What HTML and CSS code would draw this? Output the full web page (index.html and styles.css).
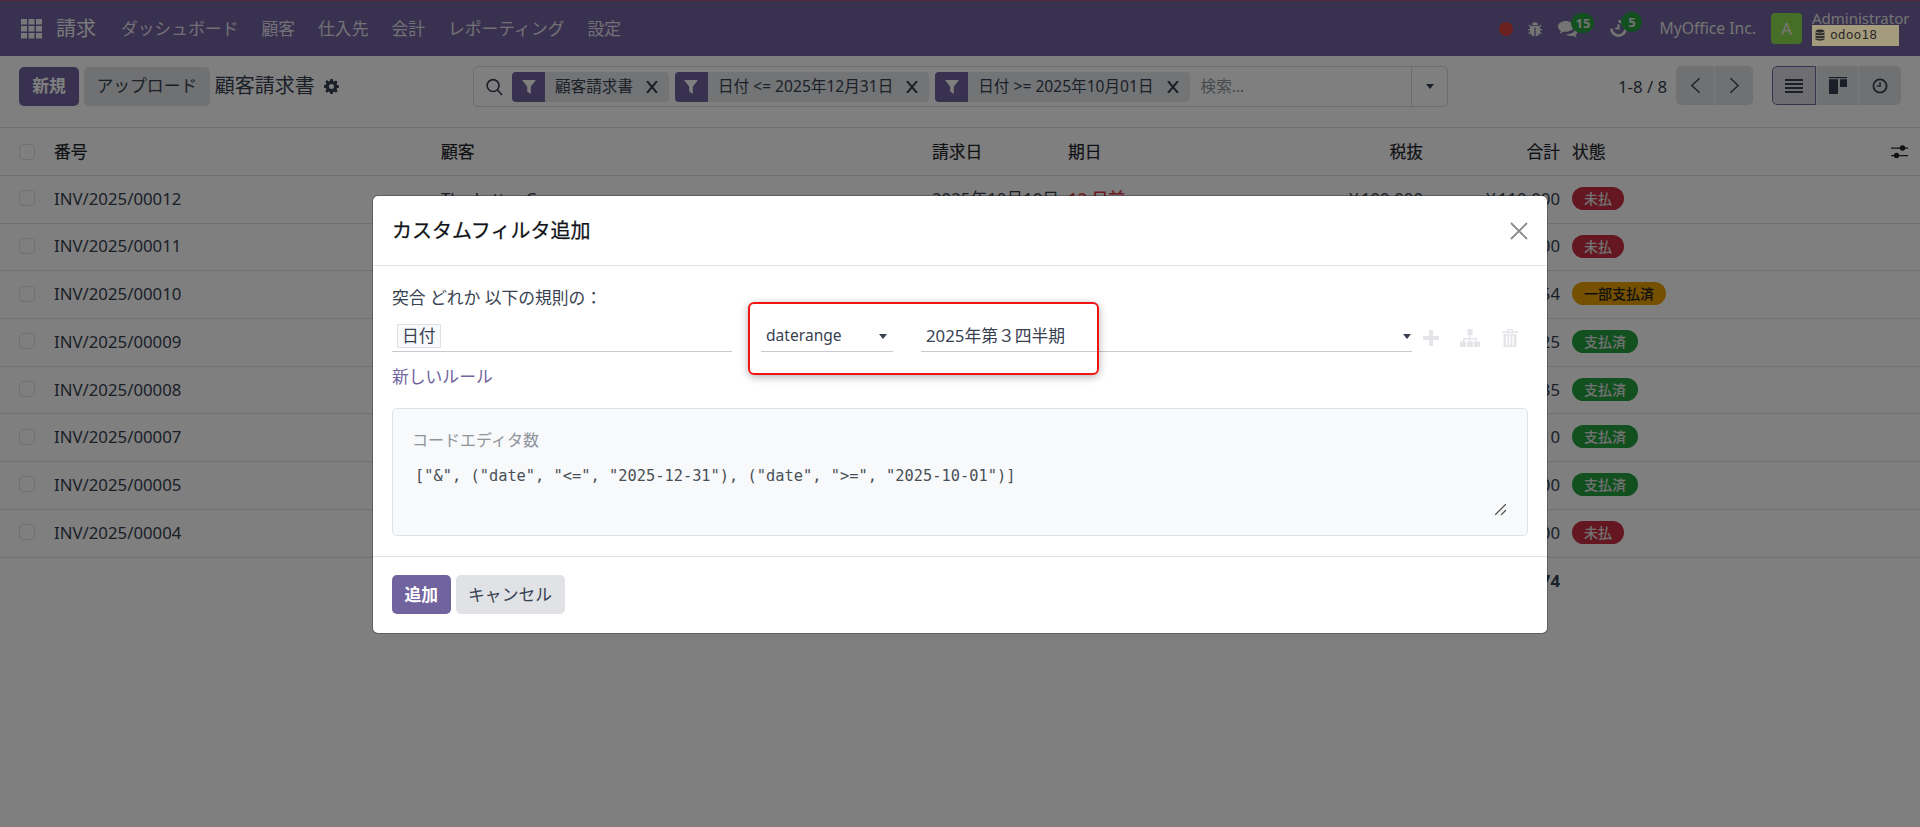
FILE: index.html
```html
<!DOCTYPE html>
<html lang="ja">
<head>
  <meta charset="UTF-8"/>
  <title>顧客請求書</title>
  <link rel="stylesheet" href="styles.css">
</head>
<body>
  <!-- top navbar -->
  <header class="navbar">
    <svg class="apps-icon" viewBox="0 0 21 20"><path d="M0 0h6v5.500H0zM7.500 0h6v5.500h-6zM15 0h6v5.500h-6zM0 7h6v5.500H0zM7.500 7h6v5.500h-6zM15 7h6v5.500h-6zM0 14h6v5.500H0zM7.500 14h6v5.500h-6zM15 14h6v5.500h-6z"/></svg>
    <span class="app-name">請求</span>
    <nav class="menu">
      <a>ダッシュボード</a><a>顧客</a><a>仕入先</a><a>会計</a><a>レポーティング</a><a>設定</a>
    </nav>
    <div class="systray">
      <span class="rec-dot"></span>
      <svg class="tray-bug" viewBox="0 0 16 16"><path d="M5 4.200a3 3 0 0 1 6 0zM3.800 5h8.400l1.500-1.600.9.900-1.600 1.700V8H15v1.300h-2v1.200l1.700 1.800-.9.900-1.200-1.300A4 4 0 0 1 8.600 15V6.500H7.400V15a4 4 0 0 1-4-3.100l-1.200 1.300-.9-.9L3 10.500V9.300H1V8h2V6L1.400 4.300l.9-.9z"/></svg>
      <span class="tray-item tray-chat">
        <svg viewBox="0 0 20 17"><path d="M8 1C3.800 1 .5 3.300.5 6.200c0 1.700 1.100 3.200 2.800 4.100-.2.900-.8 1.700-1.400 2.300 1.500-.2 2.800-.8 3.800-1.600.7.100 1.500.2 2.300.2 4.200 0 7.500-2.300 7.500-5S12.200 1 8 1z"/><path d="M17 7.500c0 3-3 5.500-7.500 6-.5 0-.9.100-1.300.1 1.200.9 2.900 1.400 4.600 1.400.6 0 1.200-.1 1.800-.2 1 .8 2.300 1.400 3.800 1.600-.6-.6-1.200-1.400-1.400-2.300 1.400-.8 2-2 2-3.300 0-1.200-.9-2.400-2-3z"/></svg>
        <b class="tray-badge">15</b>
      </span>
      <span class="tray-item tray-clock">
        <svg viewBox="0 0 18 18"><path d="M9 1a8 8 0 1 1-8 8h2.600A5.400 5.400 0 1 0 9 3.600z"/><path d="M8 5h2v5H6V8h2z"/></svg>
        <b class="tray-badge">5</b>
      </span>
      <span class="company">MyOffice Inc.</span>
      <span class="avatar">A</span>
      <div class="user">
        <span class="user-name">Administrator</span>
        <span class="db-name"><svg viewBox="0 0 12 13"><path d="M6 0c3 0 5.500.8 5.500 1.800S9 3.700 6 3.700.5 2.800.5 1.800 3 0 6 0zM.5 3.300C1.500 4.200 3.600 4.700 6 4.700s4.500-.5 5.500-1.400v2C11.500 6.200 9 7 6 7S.5 6.200.5 5.300zM.5 6.800C1.500 7.700 3.600 8.100 6 8.100s4.500-.4 5.500-1.300v2C11.500 9.700 9 10.500 6 10.500S.5 9.700.5 8.800zM.5 10.200c1 .9 3.100 1.300 5.500 1.300s4.500-.4 5.500-1.300v1c0 1-2.500 1.800-5.500 1.800S.5 12.200.5 11.200z"/></svg>odoo18</span>
      </div>
    </div>
  </header>

  <!-- control panel -->
  <section class="control-panel">
    <button class="btn btn-primary">新規</button>
    <button class="btn btn-secondary">アップロード</button>
    <span class="page-title">顧客請求書</span>
    <svg class="gear" viewBox="0 0 16 16"><path d="M6.700 0h2.600l.4 2.100 1.300.6L12.800 1.500l1.800 1.800-1.200 1.800.6 1.300 2 .4v2.500l-2 .4-.6 1.300 1.200 1.800-1.800 1.800-1.800-1.200-1.300.6-.4 2H6.700l-.4-2-1.300-.6-1.800 1.200-1.800-1.800 1.200-1.800-.6-1.300-2-.4V6.400l2-.4.6-1.300-1.200-1.800 1.800-1.800L5 2.700l1.300-.6zM8 5.300a2.700 2.700 0 1 0 0 5.400 2.700 2.700 0 0 0 0-5.400z" fill-rule="evenodd"/></svg>

    <div class="searchbar">
      <svg class="search-icon" viewBox="0 0 18 18"><circle cx="7.500" cy="7.500" r="6.300"/><path d="M12 12l5 5.500"/></svg>
      <div class="facet">
        <span class="facet-icon"><svg viewBox="0 0 14 14"><path d="M0 0h14L8.800 6.500V14L5.200 11.500v-5z"/></svg></span>
        <span class="facet-text">顧客請求書</span><svg class="facet-x" viewBox="0 0 12 12"><path d="M1 0l10 12M11 0L1 12"/></svg>
      </div>
      <div class="facet">
        <span class="facet-icon"><svg viewBox="0 0 14 14"><path d="M0 0h14L8.800 6.500V14L5.200 11.500v-5z"/></svg></span>
        <span class="facet-text">日付 &lt;= 2025年12月31日</span><svg class="facet-x" viewBox="0 0 12 12"><path d="M1 0l10 12M11 0L1 12"/></svg>
      </div>
      <div class="facet">
        <span class="facet-icon"><svg viewBox="0 0 14 14"><path d="M0 0h14L8.800 6.500V14L5.200 11.500v-5z"/></svg></span>
        <span class="facet-text">日付 &gt;= 2025年10月01日</span><svg class="facet-x" viewBox="0 0 12 12"><path d="M1 0l10 12M11 0L1 12"/></svg>
      </div>
      <span class="search-placeholder">検索...</span>
      <span class="search-toggle"><i class="caret"></i></span>
    </div>

    <span class="pager-text">1-8 / 8</span>
    <div class="btn-group pager">
      <button class="group-btn"><svg viewBox="0 0 12 18"><path d="M10.500 1L2 9l8.500 8"/></svg></button>
      <button class="group-btn"><svg viewBox="0 0 12 18"><path d="M1.500 1L10 9l-8.500 8"/></svg></button>
    </div>
    <div class="btn-group views">
      <button class="group-btn view-btn active"><svg class="ico-list" viewBox="0 0 18 14" preserveAspectRatio="none"><path d="M0 0h18v2H0zM0 4h18v2H0zM0 8h18v2H0zM0 12h18v2H0z"/></svg></button>
      <button class="group-btn view-btn"><svg class="ico-kanban" viewBox="0 0 18 17"><path d="M0 0h18v1.200H0zM0 2.200h9V17H0zM11 2.200h7V10h-7z"/></svg></button>
      <button class="group-btn view-btn"><svg class="ico-clock" viewBox="0 0 16 16"><path fill-rule="evenodd" d="M8 .5a7.500 7.500 0 1 1 0 15A7.500 7.500 0 0 1 8 .5zm0 1.800a5.700 5.700 0 1 0 0 11.400A5.700 5.700 0 0 0 8 2.300z"/><path d="M7.300 4.300h1.500v4.500H4.500V7.400h2.800z"/></svg></button>
    </div>
  </section>

  <!-- invoice list -->
  <main class="list">
    <div class="list-row list-head">
      <span class="check"></span><span>番号</span><span>顧客</span><span>請求日</span><span>期日</span>
      <span class="num">税抜</span><span class="num">合計</span><span class="state">状態</span>
      <svg class="sliders" viewBox="0 0 17 14"><path d="M0 2.500h17v1.200H0zM0 10h17v1.200H0z"/><circle cx="11.500" cy="3" r="2.700"/><circle cx="5.500" cy="10.500" r="2.700"/></svg>
    </div>
    <div class="list-row"><span class="check"></span><span>INV/2025/00012</span><span>The Letter C</span><span>2025年10月10日</span><span class="overdue">12 日前</span><span class="num">¥ 100,000</span><span class="num">¥ 110,000</span><span class="state"><b class="badge red">未払</b></span></div>
    <div class="list-row"><span class="check"></span><span>INV/2025/00011</span><span></span><span></span><span></span><span class="num"></span><span class="num">00</span><span class="state"><b class="badge red">未払</b></span></div>
    <div class="list-row"><span class="check"></span><span>INV/2025/00010</span><span></span><span></span><span></span><span class="num"></span><span class="num">54</span><span class="state"><b class="badge amber">一部支払済</b></span></div>
    <div class="list-row"><span class="check"></span><span>INV/2025/00009</span><span></span><span></span><span></span><span class="num"></span><span class="num">25</span><span class="state"><b class="badge green">支払済</b></span></div>
    <div class="list-row"><span class="check"></span><span>INV/2025/00008</span><span></span><span></span><span></span><span class="num"></span><span class="num">35</span><span class="state"><b class="badge green">支払済</b></span></div>
    <div class="list-row"><span class="check"></span><span>INV/2025/00007</span><span></span><span></span><span></span><span class="num"></span><span class="num">10</span><span class="state"><b class="badge green">支払済</b></span></div>
    <div class="list-row"><span class="check"></span><span>INV/2025/00005</span><span></span><span></span><span></span><span class="num"></span><span class="num">00</span><span class="state"><b class="badge green">支払済</b></span></div>
    <div class="list-row"><span class="check"></span><span>INV/2025/00004</span><span></span><span></span><span></span><span class="num"></span><span class="num">00</span><span class="state"><b class="badge red">未払</b></span></div>
    <div class="list-row list-total"><span></span><span></span><span></span><span></span><span></span><span class="num"></span><span class="num">74</span><span></span></div>
  </main>

  <!-- dialog over the dimmed page -->
  <div class="backdrop">
    <div class="modal">
      <div class="modal-head">
        <h4>カスタムフィルタ追加</h4>
        <svg class="modal-close" viewBox="0 0 18 18"><path d="M1 1l16 16M17 1L1 17"/></svg>
      </div>
      <div class="modal-body">
        <p class="rule-title">突合 どれか 以下の規則の：</p>
        <div class="rule-row">
          <div class="rule-field field-path"><span class="path-tag">日付</span></div>
          <div class="rule-field field-op"><span>daterange</span><i class="caret"></i></div>
          <div class="rule-field field-value"><span>2025年第３四半期</span><i class="caret"></i></div>
          <div class="rule-actions">
            <svg viewBox="0 0 14 14"><path d="M5.300 0h3.400v5.300H14v3.400H8.700V14H5.300V8.700H0V5.300h5.300z"/></svg>
            <svg viewBox="0 0 20 18"><path d="M7.500 0h5v6h-5zM9.300 6h1.400v3H17v3.500h-1.400V10.400h-4.900v2.100H9.300v-2.100H4.400v2.100H3V9h6.300zM0 12.500h6V18H0zM7 12.500h6V18H7zM14 12.500h6V18h-6z"/></svg>
            <svg viewBox="0 0 16 18"><path fill-rule="evenodd" d="M5.500 0h5l1 2.500H16V4H0V2.500h4.500zM6.500 1.200l-.5 1.300h4l-.5-1.300zM1.500 5h13v13h-13zM4 6.500v10h1.500v-10zM7.300 6.500v10h1.400v-10zM10.500 6.500v10H12v-10z"/></svg>
          </div>
        </div>
        <a class="new-rule">新しいルール</a>
        <div class="code-editor">
          <div class="code-label">コードエディタ数</div>
          <div class="code-text">["&amp;", ("date", "&lt;=", "2025-12-31"), ("date", "&gt;=", "2025-10-01")]</div>
          <svg class="code-resize" viewBox="0 0 11 11"><path d="M0 11L11 0M6 11l5-5"/></svg>
        </div>
      </div>
      <div class="modal-foot">
        <button class="btn btn-primary">追加</button>
        <button class="btn btn-secondary">キャンセル</button>
      </div>
    </div>
    <!-- red annotation drawn on the screenshot -->
    <div class="annotation"></div>
  </div>
</body>
</html>
```

FILE: styles.css
```css
* { box-sizing:border-box; }
html, body { height:100%; }
body {
  margin:0; background:#fff; color:#374151; overflow:hidden; position:relative;
  font-family:"Noto Sans","Noto Sans CJK JP",sans-serif; font-size:16.8px; line-height:1.5;
}
button { font:inherit; border:none; cursor:pointer; }
svg { display:block; fill:currentColor; }

/* navbar */
.navbar {
  height:56px; background:#71639e; color:#fff; display:flex; align-items:center;
  padding:0 0 0 21px; border-top:1px solid #a0566a;
}
.apps-icon { width:21px; height:20px; margin-right:14px; opacity:.9; }
.app-name { font-size:20px; margin-right:25px; color:#f4f2f8; }
.menu { display:flex; gap:23px; }
.menu a { color:#e4e0ee; }
.systray { margin-left:auto; display:flex; align-items:center; }
.rec-dot { width:14px; height:14px; border-radius:50%; background:#d84040; margin-right:14px; }
.tray-bug { width:16px; height:16px; color:#e8e8e8; margin-right:14px; }
.tray-item { position:relative; display:block; color:#e8e8e8; }
.tray-chat svg { width:22px; height:18px; }
.tray-clock svg { width:19px; height:19px; }
.tray-chat { margin-right:30px; }
.tray-clock { margin-right:31px; }
.tray-badge {
  position:absolute; top:-7px; left:14px; min-width:21px; height:20px; border-radius:10px;
  background:#24a040; color:#e6e6e6; font-size:13px; font-weight:700; line-height:20px; text-align:center;
  padding:0 4px;
}
.tray-clock .tray-badge { left:12px; }
.company { color:#e8e8e8; font-size:15.7px; margin-right:15px; }
.avatar {
  width:31px; height:31px; border-radius:4px; background:#8fdc4f; color:#f0f0f0;
  display:flex; align-items:center; justify-content:center; margin-right:10px;
}
.user { width:87px; margin-right:21px; display:flex; flex-direction:column; }
.user-name { font-size:15px; line-height:12px; color:#e8e8e8; }
/* tan chip stays brighter than the dimming would leave it */
.db-name {
  position:relative; z-index:1;
  height:21px; margin-top:1px; background:#a49a7c; color:#2b2b2b; display:flex; align-items:center; gap:5px; padding-left:3px;
  font-family:"DejaVu Sans Mono",monospace; font-size:13px;
}
.db-name svg { width:10px; height:12px; }

/* control panel */
.control-panel {
  height:72px; display:flex; align-items:center; padding:0 19px 11px; border-bottom:1px solid #dee2e6; position:relative;
}
.btn { height:39px; padding:0 12.500px; border-radius:5px; white-space:nowrap; }
.btn-primary { background:#71639e; color:#fff; font-weight:700; }
.btn-secondary { background:#e0e2e6; color:#374151; }
.control-panel .btn-primary { width:60px; }
.control-panel .btn-secondary { margin-left:5px; }
.page-title { font-size:20px; margin-left:5px; }
.gear { width:15px; height:15px; margin-left:9px; color:#374151; }
.searchbar {
  position:absolute; left:473px; top:10px; width:975px; height:41px; border:1px solid #d8dadd; border-radius:5px;
  display:flex; align-items:center; padding-left:12px; gap:6px;
}
.search-icon { width:17px; height:18px; fill:none; stroke:#374151; stroke-width:1.700; margin-right:3px; }
.facet { height:30px; display:flex; align-items:center; background:#e7e9ed; border-radius:4px; font-size:15.600px; overflow:hidden; }
.facet-icon { width:33px; height:100%; background:#71639e; color:#fff; display:flex; align-items:center; justify-content:center; }
.facet-icon svg { width:14px; height:14px; }
.facet-text { padding:0 13px 0 10px; white-space:nowrap; }
.facet-x { width:12px; height:12px; margin-right:11px; fill:none; stroke:#374151; stroke-width:2; }
.search-placeholder { color:#8f949c; font-size:15.600px; margin-left:5px; }
.search-toggle {
  position:absolute; right:0; top:0; height:100%; width:36px; border-left:1px solid #d8dadd;
  display:flex; align-items:center; justify-content:center;
}
.caret { display:block; width:0; height:0; border:4.500px solid transparent; border-top:5px solid #374151; border-bottom:0; }
.pager-text { position:absolute; left:1618px; top:18px; }
.btn-group { display:flex; height:39px; border-radius:5px; overflow:hidden; position:absolute; top:10px; background:#e0e2e6; }
.pager { left:1676px; width:77px; }
.views { left:1772px; width:129px; }
.group-btn { flex:1; background:none; display:flex; align-items:center; justify-content:center; border-left:1px solid #f4f5f7; padding:0; color:#374151; }
.group-btn:first-child { border-left:none; }
.pager svg { width:11px; height:17px; fill:none; stroke:#374151; stroke-width:1.500; }
.ico-list { width:18px; height:14px; }
.ico-kanban { width:18px; height:17px; }
.ico-clock { width:16px; height:16px; }
.view-btn.active { background:#dcdde5; border:1px solid #71639e; border-radius:5px 0 0 5px; }

/* list */
.list-row {
  height:47.700px; display:grid; align-items:center; border-bottom:1px solid #dee2e6; position:relative;
  grid-template-columns:54px 387px 491px 136px 215px 140px 137px 1fr;
  padding-bottom:2px;
}
.list-row > span { white-space:nowrap; overflow:hidden; }
.list-head { height:48px; color:#1f242b; padding-bottom:0; -webkit-text-stroke:.2px; }
.list-row .check { width:16px; height:16px; margin-left:19px; border:1px solid #e0e2e6; border-radius:4px; background:#fff; }
.num { text-align:right; word-spacing:-2px; }
.list-row .state { padding-left:12px; overflow:visible; }
.overdue { color:#dc3545; font-weight:500; }
.sliders { position:absolute; left:1891px; top:17px; width:17px; height:14px; }
.list-total { border-bottom:none; font-weight:700; }
.badge { display:block; width:fit-content; height:23px; border-radius:12px; padding:0 12px; font-size:14px; line-height:23px; font-weight:500; }
.red { background:#c82f40; color:#e4e4e4; }
.amber { background:#e8a000; color:#1f1f1f; }
.green { background:#24a040; color:#e4e4e4; }

/* dialog */
.backdrop {
  position:absolute; inset:0; background:rgba(0,0,0,.5);
  display:flex; justify-content:center; align-items:flex-start; padding-top:196px;
}
.modal { width:1174px; height:437px; background:#fff; border-radius:5px; display:flex; flex-direction:column; box-shadow:0 0 0 1px rgba(0,0,0,.25); }
.modal-head { height:70px; flex:none; display:flex; align-items:center; justify-content:space-between; padding:0 19px; border-bottom:1px solid #dee2e6; }
.modal-head h4 { margin:0; font-size:20px; font-weight:400; color:#111418; -webkit-text-stroke:.25px; }
.modal-close { width:18px; height:18px; fill:none; stroke:#8a8a8a; stroke-width:1.800; }
.modal-body { flex:1; padding:19px 19px 0; }
.rule-title { margin:0 0 8px; line-height:25px; font-size:16.800px; }
.rule-row { display:flex; height:34px; align-items:stretch; }
.rule-field { border-bottom:1px solid #c8cad0; display:flex; align-items:center; justify-content:space-between; padding-top:3px; }
.field-path { width:340px; margin-right:29px; padding-top:2px; }
.path-tag { margin-left:5px; padding:0 4px; height:24px; line-height:22px; background:#f8f9fa; border:1px solid #dee2e6; }
.field-op { width:132px; margin-right:28px; padding-left:5px; padding-right:6px; font-size:15.600px; }
.field-value { width:491px; padding-left:5px; padding-right:1px; }
.rule-actions { display:flex; align-items:center; color:#e4e5e8; padding:6px 0 0 11px; }
.rule-actions svg:nth-child(1) { width:16px; height:16px; margin-right:21px; }
.rule-actions svg:nth-child(2) { width:20px; height:18px; margin-right:22px; }
.rule-actions svg:nth-child(3) { width:16px; height:18px; }
.new-rule { display:block; margin-top:12px; color:#71639e; }
.code-editor {
  position:relative; height:128px; margin-top:19px; background:#f8f9fa; border:1px solid #dee2e6; border-radius:5px; padding:19px;
}
.code-label { color:#8f949c; font-size:16px; }
.code-text { margin-top:13px; padding-left:3px; font-family:"DejaVu Sans Mono",monospace; font-size:15.350px; white-space:nowrap; color:#495057; }
.code-resize { position:absolute; right:21px; bottom:20px; width:11px; height:11px; fill:none; stroke:#555; stroke-width:1.300; }
.modal-foot { height:77px; flex:none; border-top:1px solid #dee2e6; padding:18px 19px 0; display:flex; gap:5px; align-items:flex-start; }

/* annotation */
.annotation {
  position:absolute; left:748px; top:302px; width:351px; height:73px;
  border:2px solid #f01414; border-radius:6px; box-shadow:0 2px 8px rgba(0,0,0,.3);
}
```
